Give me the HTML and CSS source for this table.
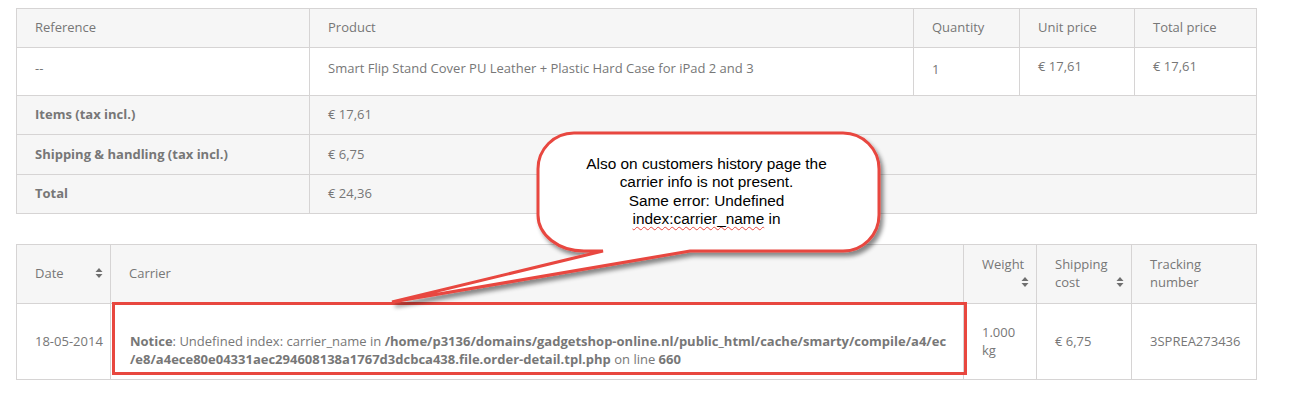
FILE: index.html
```html
<!DOCTYPE html>
<html>
<head>
<meta charset="utf-8">
<link rel="stylesheet" href="styles.css">
</head>
<body>
<div class="page">
  <table class="tbl items">
    <colgroup>
      <col class="c-ref"><col class="c-prod"><col class="c-qty"><col class="c-unit"><col class="c-total">
    </colgroup>
    <thead>
      <tr><th>Reference</th><th>Product</th><th>Quantity</th><th>Unit price</th><th>Total price</th></tr>
    </thead>
    <tbody>
      <tr class="line">
        <td>--</td>
        <td>Smart Flip Stand Cover PU Leather + Plastic Hard Case for iPad 2 and 3</td>
        <td class="qty">1</td>
        <td class="price">€ 17,61</td>
        <td class="price">€ 17,61</td>
      </tr>
    </tbody>
    <tfoot>
      <tr><td class="label">Items (tax incl.)</td><td colspan="4">€ 17,61</td></tr>
      <tr class="ship"><td class="label">Shipping &amp; handling (tax incl.)</td><td colspan="4">€ 6,75</td></tr>
      <tr><td class="label">Total</td><td colspan="4">€ 24,36</td></tr>
    </tfoot>
  </table>

  <table class="tbl shipping">
    <colgroup>
      <col class="c-date"><col class="c-carrier"><col class="c-weight"><col class="c-cost"><col class="c-track">
    </colgroup>
    <thead>
      <tr>
        <th><div class="sortable"><span>Date</span><svg class="sort" viewBox="0 0 8 12" width="8" height="12"><path d="M0.5 5 L4 1 L7.5 5 Z M0.5 7 L4 11 L7.5 7 Z"/></svg></div></th>
        <th>Carrier</th>
        <th><div>Weight</div><div class="sort-line"><svg class="sort" viewBox="0 0 8 12" width="8" height="12"><path d="M0.5 5 L4 1 L7.5 5 Z M0.5 7 L4 11 L7.5 7 Z"/></svg></div></th>
        <th><div>Shipping</div><div class="sortable"><span>cost</span><svg class="sort" viewBox="0 0 8 12" width="8" height="12"><path d="M0.5 5 L4 1 L7.5 5 Z M0.5 7 L4 11 L7.5 7 Z"/></svg></div></th>
        <th>Tracking number</th>
      </tr>
    </thead>
    <tbody>
      <tr>
        <td class="date">18-05-2014</td>
        <td class="carrier"><br><b>Notice</b>: Undefined index: carrier_name in <b>/home/p3136/domains/gadgetshop-online.nl/public_html/cache/smarty/compile/a4/ec</b><br><b>/e8/a4ece80e04331aec294608138a1767d3dcbca438.file.order-detail.tpl.php</b> on line <b>660</b></td>
        <td>1.000 kg</td>
        <td>€ 6,75</td>
        <td>3SPREA273436</td>
      </tr>
    </tbody>
  </table>

  <div class="mark-box"></div>

  <svg class="callout" width="1299" height="395" viewBox="0 0 1299 395">
    <defs>
      <filter id="shadow" x="-10%" y="-10%" width="130%" height="140%">
        <feDropShadow dx="3" dy="4" stdDeviation="2" flood-color="#000" flood-opacity="0.45"/>
      </filter>
    </defs>
    <path d="M574 133 H843 A36 36 0 0 1 879 169 V215 A36 36 0 0 1 843 251 H690 L392 302 L603 251 H584 A46 36 0 0 1 538 215 V169 A36 36 0 0 1 574 133 Z"
          fill="#fff" stroke="#e8473f" stroke-width="3" stroke-linejoin="miter" filter="url(#shadow)"/>
  </svg>
  <div class="callout-text">
    Also on customers history page the<br>
    carrier info is not present.<br>
    Same error: Undefined<br>
    <span class="spell">index:carrier_name</span> in
  </div>
</div>
</body>
</html>
```

FILE: styles.css
```css
html, body {
  margin: 0;
  padding: 0;
  background: #fff;
}

.page {
  position: relative;
  width: 1299px;
  height: 395px;
  padding: 8px 0 0 16px;
  box-sizing: border-box;
  font-family: "Open Sans", "Liberation Sans", sans-serif;
  font-size: 13px;
  line-height: 18px;
  color: #777;
}

.tbl {
  border-collapse: collapse;
  table-layout: fixed;
  width: 1240px;
}

.tbl th,
.tbl td {
  border: 1px solid #d6d4d4;
  padding: 9px 8px 11px 18px;
  text-align: left;
  vertical-align: middle;
  font-weight: normal;
}

.tbl thead th {
  background: #f6f6f6;
}

.items { margin-bottom: 30px; }

.c-ref { width: 293px; }
.c-prod { width: 604px; }
.c-qty { width: 106px; }
.c-unit { width: 115px; }
.c-total { width: 122px; }

.items .line td {
  vertical-align: top;
  padding-top: 11px;
  padding-bottom: 18px;
  background: #fff;
}
.items .line td.qty {
  padding-top: 12px;
  padding-bottom: 17px;
}
.items .line td.price {
  padding-top: 9px;
  padding-bottom: 20px;
}

.items tfoot td {
  background: #f6f6f6;
}
.items tfoot .ship td {
  padding-top: 10px;
  padding-bottom: 11px;
}
.items tfoot td.label {
  font-weight: bold;
}

.c-date { width: 94px; }
.c-carrier { width: 853px; }
.c-weight { width: 73px; }
.c-cost { width: 95px; }
.c-track { width: 125px; }

.shipping thead th {
  padding: 10px 7px 12px 18px;
}
.shipping tbody td {
  padding: 10px 8px 11px 18px;
}
.shipping tbody td.date {
  white-space: nowrap;
  padding-right: 4px;
}
.shipping tbody td.carrier {
  padding-left: 19px;
}

.sortable {
  display: flex;
  justify-content: space-between;
  align-items: center;
}
.sort-line {
  display: flex;
  justify-content: flex-end;
  align-items: center;
  height: 18px;
}
.sort {
  display: block;
  fill: #6f6f6f;
}

.mark-box {
  position: absolute;
  left: 112px;
  top: 302px;
  width: 849px;
  height: 67px;
  border: 3px solid #e8473f;
}

.callout {
  position: absolute;
  left: 0;
  top: 0;
  pointer-events: none;
}

.callout-text {
  position: absolute;
  left: 536px;
  top: 155px;
  width: 341px;
  text-align: center;
  font-family: "Liberation Sans", Arial, sans-serif;
  font-size: 15.4px;
  line-height: 18.4px;
  color: #000;
}

.spell {
  text-decoration: underline wavy #e8473f;
  text-decoration-thickness: 1px;
  text-underline-offset: 2px;
}
```
